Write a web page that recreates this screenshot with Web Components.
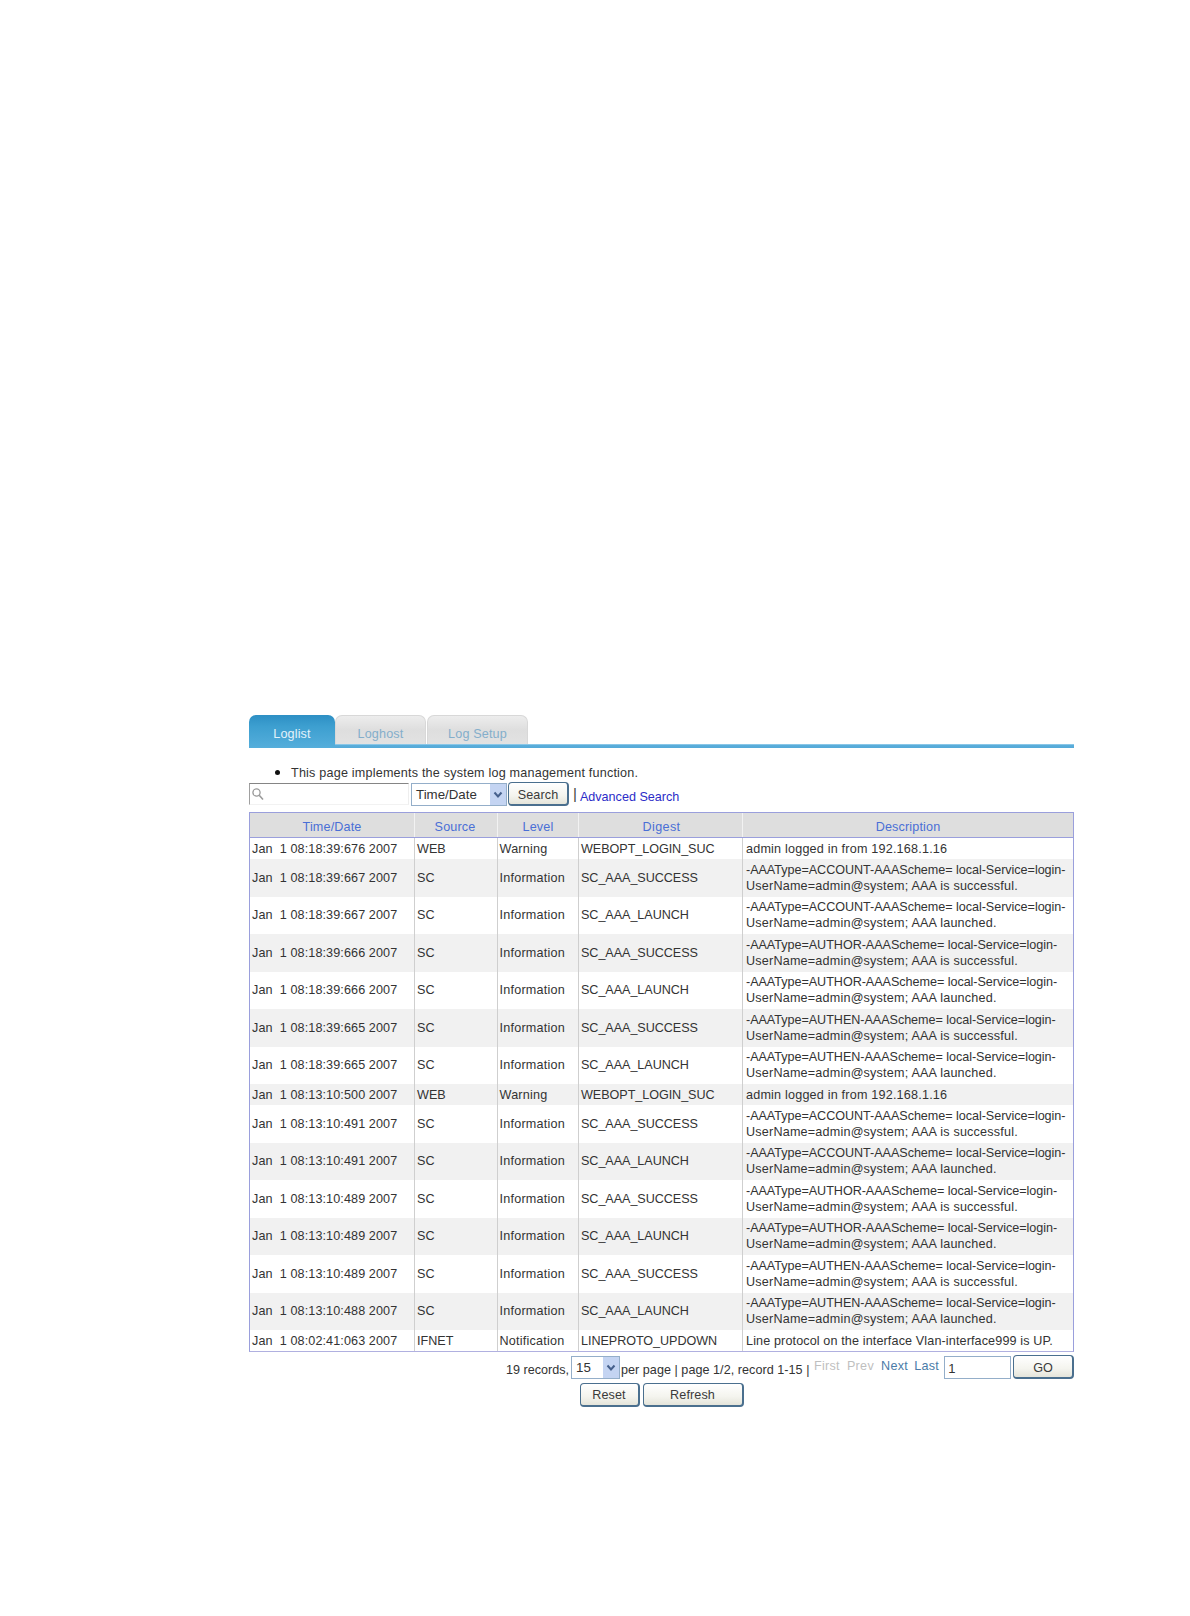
<!DOCTYPE html>
<html lang="en">
<head>
<meta charset="utf-8">
<title>Loglist</title>
<style>
html,body{margin:0;background:#fff}
body{font:12.6px "Liberation Sans",Arial,sans-serif;color:#333;width:1190px;height:1616px;overflow:hidden}
</style>
</head>
<body>
<log-page>
  <log-tabs></log-tabs>
  <log-note>This page implements the system log management function.</log-note>
  <log-search></log-search>
  <log-table id="t"></log-table>
  <log-pager></log-pager>
  <log-actions></log-actions>
</log-page>
<script>
function el(name, css, html){
  class C extends HTMLElement{
    constructor(){super();this.attachShadow({mode:'open'}).innerHTML='<style>'+css+'</style>'+html;}
  }
  customElements.define(name,C);
}
const chevron='<svg width="10" height="8" viewBox="0 0 10 8"><path d="M1.5 1.5 5 5.5 8.5 1.5" fill="none" stroke="#46608c" stroke-width="2"/></svg>';

el('ui-button',`
:host{display:inline-flex;box-sizing:border-box;height:24px;align-items:center;justify-content:center;
border:1px solid #4a6f8e;border-right-width:2px;border-bottom-width:2px;border-radius:4px;
background:linear-gradient(#fff,#f4f4ee 60%,#e4e4da);color:#3a3a3a;font:12.6px "Liberation Sans",Arial,sans-serif;letter-spacing:.1px;padding-top:1px}
`,'<slot></slot>');

el('ui-select',`
:host{display:inline-flex;box-sizing:border-box;height:23px;border:1px solid #94aec9;background:#fff;align-items:center;justify-content:space-between;
color:#333;font:13.3px "Liberation Sans",Arial,sans-serif;padding-left:4px}
.a{width:16px;height:21px;background:#c4d4f2;display:flex;align-items:center;justify-content:center}
`,'<slot></slot><span class="a">'+chevron+'</span>');

el('log-page',`
:host{display:block;box-sizing:border-box;padding:715px 0 0 249px;width:1074px}
`,'<slot></slot>');

el('log-tab',`
:host{display:flex;box-sizing:border-box;height:29px;align-items:center;justify-content:center;
border-radius:7px 7px 0 0;border:1px solid #d8d8d8;border-bottom:0;padding-top:7px;letter-spacing:.15px;
background:linear-gradient(#ededed,#dedede 50%,#e2e2e2);color:#84aecb;font-size:12.6px}
:host([active]){height:33px;border:0;color:#e4f2fa;padding-top:5px;
background:linear-gradient(#2d8fc4,#3d9fd0 35%,#55aedb)}
`,'<slot></slot>');

el('log-tabs',`
:host{display:block;height:33px;position:relative}
.row{display:flex;gap:2px;height:29px;position:relative}
.line{position:absolute;left:0;right:0;top:29px;height:4px;background:linear-gradient(#a9d8f0 0,#5aaedb 30%,#54a9d8)}
log-tab{position:relative}
log-tab[active]{z-index:1}
`,`<div class="line"></div><div class="row">
<log-tab active style="width:86px">Loglist</log-tab>
<log-tab style="width:91px;margin-left:-2px">Loghost</log-tab>
<log-tab style="width:101px;margin-left:-1px">Log Setup</log-tab></div>`);

el('log-note',`
:host{display:flex;align-items:center;height:19px;margin-top:15px;padding-left:26px;color:#333;font-size:12.6px;letter-spacing:.2px}
i{width:5px;height:5px;border-radius:50%;background:#111;margin-right:11px}
`,'<i></i><slot></slot>');

el('log-search',`
:host{display:flex;align-items:flex-start;height:29px;margin-top:1px}
.inp{box-sizing:border-box;width:160px;height:22px;border-top:1px solid #858585;border-left:1px solid #a0a0a0;border-right:1px solid #eee;border-bottom:1px solid #f2f2f2;display:flex;align-items:center;padding-left:1px}
ui-select{width:96px;margin-left:2px;padding-left:4px}
ui-button{width:61px;margin-left:1px;margin-top:-1px;padding-top:2px}
.sep{margin-left:4px;color:#444;font-size:15px;line-height:22px}
a{margin-left:3px;color:#2c2cc8;font-size:12.6px;line-height:28px;text-decoration:none}
`,`<div class="inp"><svg width="14" height="14" viewBox="0 0 14 14"><circle cx="5.5" cy="5.5" r="3.6" fill="none" stroke="#9a9a9a" stroke-width="1.3"/><path d="M8.2 8.2 12 12.5" stroke="#9a9a9a" stroke-width="1.6"/></svg></div>
<ui-select>Time/Date</ui-select><ui-button>Search</ui-button><span class="sep">|</span><a href="#">Advanced Search</a>`);

const cols='165px 83px 81px 164px 1fr';
el('log-head',`
:host{display:grid;grid-template-columns:${cols};height:24px;background:#dedede;color:#4a6fd6;border-bottom:1px solid #9a9fdc;letter-spacing:.15px}
span{display:flex;align-items:center;justify-content:center;border-right:1px solid #f2f2f2;padding-top:3px}
span:last-child{border-right:0}
span.d{letter-spacing:.35px;padding-left:2px}
span.s{padding-right:2px}
`,'<span>Time/Date</span><span class="s">Source</span><span>Level</span><span class="d">Digest</span><span>Description</span>');

class LogRow extends HTMLElement{
  constructor(){
    super();
    const s=this.attachShadow({mode:'open'});
    s.innerHTML=`<style>
:host{display:grid;grid-template-columns:${cols};background:#fff;height:21px;color:#333}
:host([tall]){height:37.5px}
:host([alt]){background:#f1f1f1}
:host([tight]) #e{letter-spacing:.125px}
div{display:flex;align-items:center;padding-left:2px;border-right:1px solid #cfcfcf;white-space:pre;box-sizing:border-box}
#a{letter-spacing:.1px}
#c{padding-left:1.5px;letter-spacing:.22px}
#d{letter-spacing:-.05px}
#e{border-right:0;padding-left:3px;display:block;line-height:16px;letter-spacing:.2px;align-self:center}
:host([tall]) #e span{display:block}
:host([tall]) #e span:first-child{letter-spacing:-.04px}
</style><div id="a"></div><div id="b"></div><div id="c"></div><div id="d"></div><div id="e"></div>`;
  }
  set data(v){
    ['a','b','c','d'].forEach((k,i)=>{this.shadowRoot.getElementById(k).textContent=v[i];});
    const e=this.shadowRoot.getElementById('e');
    v[4].split('\n').forEach(l=>{const s=document.createElement('span');s.textContent=l;e.appendChild(s);});
  }
}
customElements.define('log-row',LogRow);

el('log-table',`
:host{display:block;box-sizing:border-box;width:825px;border:1px solid #9a9fdc;border-bottom:1px solid #b0b0e0}
`,'<slot></slot>');

el('log-pager',`
:host{display:flex;align-items:flex-start;height:26px;margin-top:3px;padding-left:257px;color:#333;white-space:nowrap}
.t{margin-top:7px;line-height:16px}
.p{width:193px;flex:none;letter-spacing:.04px}
ui-select{width:49px;margin:1px 1px 0 2px;padding-left:4px}
.l{line-height:16px;margin-top:3px;margin-right:7px;letter-spacing:.3px}
.l.n{margin-right:6px}
.l.e{margin-right:0}
.off{color:#bfbfbf}.on{color:#4b7ba8}
.go{box-sizing:border-box;width:67px;height:23px;border:1px solid #94aec9;margin:1px 2px 0 5px;padding:4px 0 0 3px;font-size:13px;line-height:16px}
ui-button{width:61px;padding-top:3px}
`,`<span class="t">19 records,</span><ui-select>15</ui-select><span class="t p">per page | page 1/2, record 1-15 |</span>
<span class="l off">First</span><span class="l off">Prev</span><span class="l on n">Next</span><span class="l on e">Last</span><div class="go">1</div><ui-button>GO</ui-button>`);

el('log-actions',`
:host{display:flex;justify-content:center;gap:3px;width:825px;margin-top:2px}
#r{width:60px}
#f{width:101px}
`,'<ui-button id="r">Reset</ui-button><ui-button id="f">Refresh</ui-button>');

function desc(type,end){
  return `-AAAType=${type}-AAAScheme= local-Service=login-\nUserName=admin@system; AAA ${end}`;
}
const S='SC_AAA_SUCCESS',L='SC_AAA_LAUNCH',ok='is successful.',la='launched.';
const rows=[
 ['Jan  1 08:18:39:676 2007','WEB','Warning','WEBOPT_LOGIN_SUC','admin logged in from 192.168.1.16'],
 ['Jan  1 08:18:39:667 2007','SC','Information',S,desc('ACCOUNT',ok)],
 ['Jan  1 08:18:39:667 2007','SC','Information',L,desc('ACCOUNT',la)],
 ['Jan  1 08:18:39:666 2007','SC','Information',S,desc('AUTHOR',ok)],
 ['Jan  1 08:18:39:666 2007','SC','Information',L,desc('AUTHOR',la)],
 ['Jan  1 08:18:39:665 2007','SC','Information',S,desc('AUTHEN',ok)],
 ['Jan  1 08:18:39:665 2007','SC','Information',L,desc('AUTHEN',la)],
 ['Jan  1 08:13:10:500 2007','WEB','Warning','WEBOPT_LOGIN_SUC','admin logged in from 192.168.1.16'],
 ['Jan  1 08:13:10:491 2007','SC','Information',S,desc('ACCOUNT',ok)],
 ['Jan  1 08:13:10:491 2007','SC','Information',L,desc('ACCOUNT',la)],
 ['Jan  1 08:13:10:489 2007','SC','Information',S,desc('AUTHOR',ok)],
 ['Jan  1 08:13:10:489 2007','SC','Information',L,desc('AUTHOR',la)],
 ['Jan  1 08:13:10:489 2007','SC','Information',S,desc('AUTHEN',ok)],
 ['Jan  1 08:13:10:488 2007','SC','Information',L,desc('AUTHEN',la)],
 ['Jan  1 08:02:41:063 2007','IFNET','Notification','LINEPROTO_UPDOWN','Line protocol on the interface Vlan-interface999 is UP.'],
];
const t=document.getElementById('t');
t.appendChild(document.createElement('log-head'));
rows.forEach((r,i)=>{
  const x=document.createElement('log-row');
  if(r[4].includes('\n'))x.setAttribute('tall','');
  if(r[1]==='IFNET')x.setAttribute('tight','');
  if(i%2)x.setAttribute('alt','');
  x.data=r;
  t.appendChild(x);
});
</script>
</body>
</html>
